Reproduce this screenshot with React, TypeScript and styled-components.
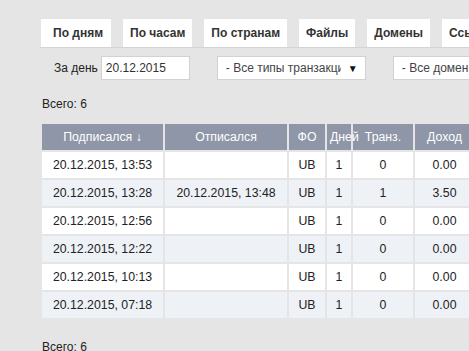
import { createGlobalStyle, styled } from "styled-components";

const GlobalStyle = createGlobalStyle`
    html, body {
        margin: 0;
        background: #e5e5e5;
        overflow: hidden;
    }
    body {
        font-family: "Liberation Sans", Arial, sans-serif;
        font-size: 12px;
        color: #222;
    }
`;

const tabs = ["По дням", "По часам", "По странам", "Файлы", "Домены", "Ссылки"];

const columns = [
    { title: "Подписался ↓", width: 121 },
    { title: "Отписался", width: 122 },
    { title: "ФО", width: 36 },
    { title: "Дней", width: 24, left: true },
    { title: "Транз.", width: 60 },
    { title: "Доход", width: 59 },
];

const rows = [
    ["20.12.2015, 13:53", "", "UB", "1", "0", "0.00"],
    ["20.12.2015, 13:28", "20.12.2015, 13:48", "UB", "1", "1", "3.50"],
    ["20.12.2015, 12:56", "", "UB", "1", "0", "0.00"],
    ["20.12.2015, 12:22", "", "UB", "1", "0", "0.00"],
    ["20.12.2015, 10:13", "", "UB", "1", "0", "0.00"],
    ["20.12.2015, 07:18", "", "UB", "1", "0", "0.00"],
];

export default function App() {
    return (
        <Page>
            <GlobalStyle />
            <TabBar>
                {tabs.map((t, i) => (
                    <Tab key={t} $active={i === 0}>
                        {t}
                    </Tab>
                ))}
            </TabBar>
            <Filters>
                <Label>За день</Label>
                <DateInput defaultValue="20.12.2015" />
                <Select>
                    <SelectText>- Все типы транзакций</SelectText>
                    <Arrow>▼</Arrow>
                </Select>
                <Select>
                    <SelectText>- Все домены</SelectText>
                    <Arrow>▼</Arrow>
                </Select>
            </Filters>
            <Total>Всего: 6</Total>
            <Table>
                <colgroup>
                    {columns.map((c) => (
                        <col key={c.title} width={c.width} />
                    ))}
                </colgroup>
                <thead>
                    <tr>
                        {columns.map((c) => (
                            <Th key={c.title} $left={c.left}>
                                {c.title}
                            </Th>
                        ))}
                    </tr>
                </thead>
                <tbody>
                    {rows.map((r, i) => (
                        <Row key={i} $alt={i % 2 === 1}>
                            {r.map((v, j) => (
                                <Td key={j}>{v}</Td>
                            ))}
                        </Row>
                    ))}
                </tbody>
            </Table>
            <Total $bottom>Всего: 6</Total>
        </Page>
    );
}

const Page = styled.div`
    padding: 19px 0 0 40px;
`;

const TabBar = styled.div`
    display: flex;
    gap: 12px;
    padding-left: 1px;
    width: 600px;
    border-bottom: 1px solid #d4d4d4;
`;

const Tab = styled.div<{ $active?: boolean }>`
    flex-shrink: 0;
    height: 28px;
    line-height: 28px;
    padding: ${(p) => (p.$active ? "0 8px 0 12px" : "0 7px")};
    background: #fff;
    color: #333;
    font-weight: bold;
    white-space: nowrap;
`;

const Filters = styled.div`
    display: flex;
    align-items: center;
    height: 24px;
    margin-top: 8px;
    white-space: nowrap;
`;

const Label = styled.span`
    margin: 0 3px 0 14px;
    color: #222;
`;

const DateInput = styled.input`
    box-sizing: border-box;
    width: 89px;
    height: 24px;
    padding: 0 4px;
    border: 1px solid #d2d2d2;
    background: #fff;
    font: inherit;
    color: #333;
    outline: none;
`;

const Select = styled.div`
    box-sizing: border-box;
    flex-shrink: 0;
    display: flex;
    align-items: center;
    width: 149px;
    height: 24px;
    margin-left: 27px;
    padding-left: 8px;
    border: 1px solid #d2d2d2;
    background: #fff;
    color: #444;
`;

const SelectText = styled.span`
    flex: 1;
    overflow: hidden;
    white-space: nowrap;
`;

const Arrow = styled.span`
    width: 24px;
    text-align: center;
    font-size: 10px;
    color: #111;
`;

const Total = styled.div<{ $bottom?: boolean }>`
    padding-left: 2px;
    line-height: 14px;
    margin-top: ${(p) => (p.$bottom ? "20px" : "17px")};
    color: #222;
`;

const Table = styled.table`
    margin-top: 11px;
    width: 436px;
    table-layout: fixed;
    border-collapse: separate;
    border-spacing: 2px;
    font-size: 12.3px;
`;

const Th = styled.th<{ $left?: boolean }>`
    height: 26px;
    padding: 0 3px;
    background: #8e96a7;
    color: #fff;
    font-weight: normal;
    text-align: ${(p) => (p.$left ? "left" : "center")};
    white-space: nowrap;
`;

const Row = styled.tr<{ $alt?: boolean }>`
    background: ${(p) => (p.$alt ? "#eef2f7" : "#fff")};
`;

const Td = styled.td`
    height: 26px;
    padding: 0;
    text-align: center;
    white-space: nowrap;
    color: #222;
`;
